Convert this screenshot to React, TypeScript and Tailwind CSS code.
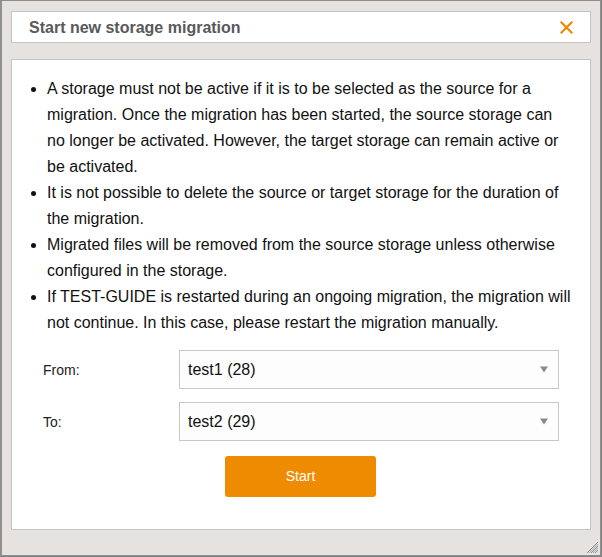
import React from "react";

const bullets = [
  "A storage must not be active if it is to be selected as the source for a migration. Once the migration has been started, the source storage can no longer be activated. However, the target storage can remain active or be activated.",
  "It is not possible to delete the source or target storage for the duration of the migration.",
  "Migrated files will be removed from the source storage unless otherwise configured in the storage.",
  "If TEST-GUIDE is restarted during an ongoing migration, the migration will not continue. In this case, please restart the migration manually.",
];

function SelectBox({ value }: { value: string }) {
  return (
    <div className="w-[380px] h-[39px] border border-[#c8c8c8] bg-[#fdfdfd] flex items-center justify-between pl-[8px] pr-[10px]">
      <span className="text-[16px] text-[#111]">{value}</span>
      <svg width="8" height="7" viewBox="0 0 8 7" className="mb-[1px]">
        <polygon points="0,0.5 8,0.5 4,6.5" fill="#8a8a8a" />
      </svg>
    </div>
  );
}

export default function App() {
  return (
    <div className="w-[602px] h-[557px] bg-[#7d7f80] font-['Liberation_Sans',Arial,sans-serif]">
      <div className="relative w-[601px] h-[556px] bg-[#e6e2e0] border-l-2 border-t border-r border-b border-[#8f8f8f] flex flex-col">
        <div className="mx-[9px] mt-[10px] h-[32px] bg-white border border-[#c4c4c4] flex items-center justify-between pl-[17px] pr-[17px]">
          <span className="text-[16px] font-bold text-[#595959] pt-[1px]">Start new storage migration</span>
          <svg width="13" height="13" viewBox="0 0 13 13" className="mt-[1px]">
            <path d="M1.5 1.5 L11.5 11.5 M11.5 1.5 L1.5 11.5" stroke="#f08a00" strokeWidth="2.2" strokeLinecap="square" />
          </svg>
        </div>
        <div className="mx-[9px] mt-[16px] h-[471px] bg-white border border-[#c4c4c4] flex flex-col">
          <ul className="list-disc ml-[35px] mt-[16px] w-[527px] text-[16px] leading-[26px] text-[#111]">
            {bullets.map((b, i) => (
              <li key={i}>{b}</li>
            ))}
          </ul>
          <div className="mt-[14px] pl-[31px] flex flex-col gap-[13px]">
            <div className="flex items-center">
              <span className="w-[136px] text-[14px] text-[#222] pt-[2px]">From:</span>
              <SelectBox value="test1 (28)" />
            </div>
            <div className="flex items-center">
              <span className="w-[136px] text-[14px] text-[#222] pt-[2px]">To:</span>
              <SelectBox value="test2 (29)" />
            </div>
          </div>
          <div className="flex justify-center mt-[15px]">
            <button className="w-[151px] h-[41px] bg-[#ee8b00] rounded-[3px] text-white text-[14px] ml-[-1px]">
              Start
            </button>
          </div>
        </div>
        <svg width="14" height="14" viewBox="0 0 14 14" className="absolute right-[1px] bottom-[1px]">
          <path d="M13 2 L2 13 M13 6 L6 13 M13 10 L10 13" stroke="#8a8a8a" strokeWidth="1" />
          <path d="M13 4 L4 13 M13 8 L8 13" stroke="#a8a8a8" strokeWidth="1" />
        </svg>
      </div>
    </div>
  );
}
